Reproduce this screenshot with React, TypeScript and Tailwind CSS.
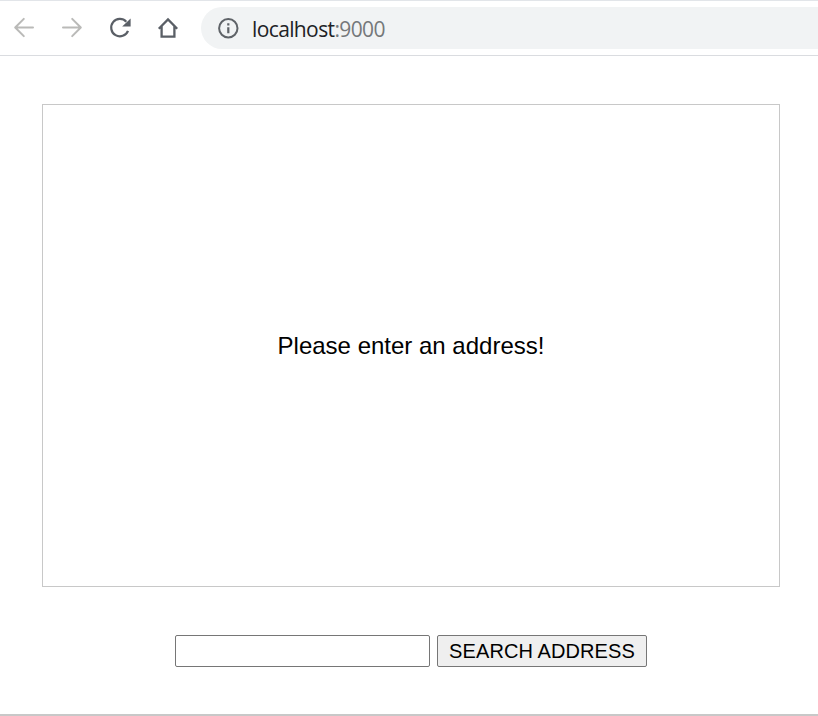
function BackIcon() {
  return (
    <svg className="block h-6 w-6" viewBox="0 0 24 24" fill="none" stroke="#babab8" strokeWidth="2" strokeLinecap="round" strokeLinejoin="round">
      <path d="M21 11.5H3.3M11.8 2.9L3.2 11.5L11.8 20.1" />
    </svg>
  );
}

function ForwardIcon() {
  return (
    <svg className="block h-6 w-6" viewBox="0 0 24 24" fill="none" stroke="#babab8" strokeWidth="2" strokeLinecap="round" strokeLinejoin="round">
      <path d="M3 11.5H20.7M12.2 2.9L20.8 11.5L12.2 20.1" />
    </svg>
  );
}

function ReloadIcon() {
  return (
    <svg className="block h-6 w-6" viewBox="0 0 24 24">
      <path d="M20 14.8A8.7 8.7 0 1 1 18.3 5.7" fill="none" stroke="#5a5f66" strokeWidth="2.2" />
      <path d="M22.6 2.4V10.6H14.2Z" fill="#5a5f66" />
    </svg>
  );
}

function HomeIcon() {
  return (
    <svg className="block h-6 w-6" viewBox="0 0 24 24" fill="none" stroke="#5a5f66" strokeWidth="2.3">
      <path d="M2.8 12.7L12 3.5L21.2 12.7M5.6 10.5V20.6H18.4V10.5" />
    </svg>
  );
}

function InfoIcon() {
  return (
    <svg className="block h-6 w-6" viewBox="0 0 24 24">
      <circle cx="12.3" cy="12.3" r="9.2" fill="none" stroke="#5f6368" strokeWidth="2" />
      <path d="M11.2 7.3H13.4V9.4H11.2ZM11.2 11.2H13.4V17.2H11.2Z" fill="#5f6368" />
    </svg>
  );
}

export default function App() {
  return (
    <div className="flex h-[716px] w-full flex-col overflow-hidden border-b-2 border-[#c8c8c8] bg-white font-['Liberation_Sans',Arial,sans-serif] text-black">
      <header className="flex h-14 shrink-0 items-center border-y border-t-[#e2e5e9] border-b-[#dadce0] pl-3">
        <nav className="flex gap-6">
          <button aria-label="Back"><BackIcon /></button>
          <button aria-label="Forward"><ForwardIcon /></button>
          <button aria-label="Reload"><ReloadIcon /></button>
          <button aria-label="Home"><HomeIcon /></button>
        </nav>
        <div className="ml-[21px] flex h-[42px] flex-1 items-center rounded-l-full bg-[#f1f3f4] pl-[15px]">
          <InfoIcon />
          <span className="ml-3 pt-px text-[21px] leading-6 tracking-[-0.62px] text-[#202124] font-['Open_Sans','Noto_Sans',sans-serif]">
            localhost<span className="text-[#75787a]">:9000</span>
          </span>
        </div>
      </header>
      <main className="flex flex-col items-center pt-12 pl-1">
        <section className="flex h-[483px] w-[738px] items-center justify-center border border-[#c8c8c8] text-2xl">
          Please enter an address!
        </section>
        <form className="mt-12 flex gap-[7px]" onSubmit={(e) => e.preventDefault()}>
          <input aria-label="Address" className="h-8 w-[255px] rounded-xs border border-[#767676] bg-white px-1 text-xl outline-none" />
          <button className="h-8 w-[210px] rounded-xs border border-[#767676] bg-[#efefef] text-xl leading-[30px] tracking-[0.09px] whitespace-nowrap">
            SEARCH ADDRESS
          </button>
        </form>
      </main>
    </div>
  );
}
